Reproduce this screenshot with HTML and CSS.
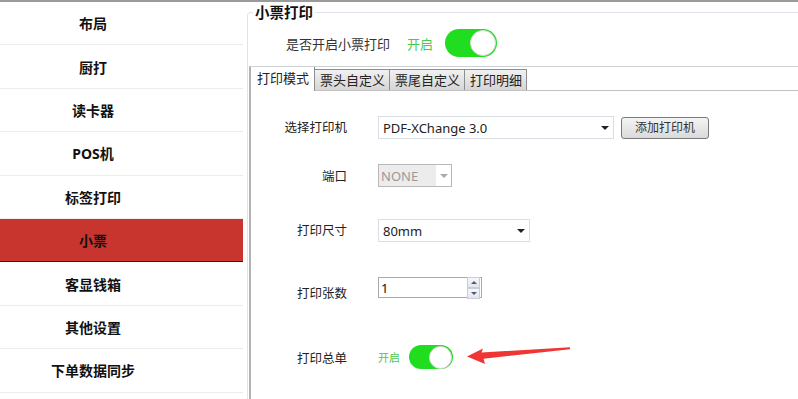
FILE: index.html
```html
<html>
<head>
<meta charset="utf-8">
<link rel="stylesheet" href="styles.css">
</head>
<body>
<div class="topbar"></div>
<div class="main">
	<div class="side">
		<div class="item">布局</div>
		<div class="item">厨打</div>
		<div class="item">读卡器</div>
		<div class="item">POS机</div>
		<div class="item">标签打印</div>
		<div class="item active">小票</div>
		<div class="item">客显钱箱</div>
		<div class="item">其他设置</div>
		<div class="item">下单数据同步</div>
	</div>

	<fieldset class="group">
		<legend class="title">小票打印</legend>
		<div class="enable">
			<span class="enable-label">是否开启小票打印</span>
			<span class="on-text">开启</span>
			<span class="switch"><span class="knob"></span></span>
		</div>

		<div class="tabctl">
			<div class="tabbar">
				<div class="tab sel">打印模式</div>
				<div class="tab">票头自定义</div>
				<div class="tab">票尾自定义</div>
				<div class="tab">打印明细</div>
			</div>
			<div class="pane">
				<div class="row r1">
					<div class="label">选择打印机</div>
					<div class="ctrls">
						<div class="select w236"><span>PDF-XChange 3.0</span><span class="arrow"></span></div>
						<div class="button">添加打印机</div>
					</div>
				</div>
				<div class="row r2">
					<div class="label lower">端口</div>
					<div class="select disabled"><span class="dis-text">NONE</span><span class="arrow grey"></span></div>
				</div>
				<div class="row r3">
					<div class="label">打印尺寸</div>
					<div class="select w152"><span>80mm</span><span class="arrow"></span></div>
				</div>
				<div class="row r4">
					<div class="label low">打印张数</div>
					<div class="spin">
						<span class="spin-val">1</span>
						<span class="spin-btns">
							<span class="sbtn"><span class="up"></span></span>
							<span class="sbtn"><span class="down"></span></span>
						</span>
					</div>
				</div>
				<div class="row r5">
					<div class="label lower">打印总单</div>
					<div class="ctrls">
						<span class="on-text small">开启</span>
						<span class="switch small-switch"><span class="knob"></span></span>
					</div>
				</div>
			</div>
		</div>
	</fieldset>
</div>

<svg class="pointer" width="798" height="399" viewBox="0 0 798 399">
	<polygon points="467,356.5 483,348.5 481.5,352.5 570,347.3 570,349.2 483.5,358.8 485,364" fill="#f03535"/>
</svg>
</body>
</html>
```

FILE: styles.css
```css
body
{
margin:0;
font-family:"Noto Sans","Noto Sans CJK SC",sans-serif;
color:#333;
background:#fff;
overflow:hidden;
}
.topbar
{
height:2px;
background-color:#9a9a9a;
}
.main
{
display:flex;
height:397px;
}

/* left menu */
.side
{
width:243px;
flex:none;
}
.item
{
height:42.4px;
border-bottom:1px solid #ececec;
display:flex;
align-items:center;
justify-content:center;
padding-right:57px;
font-size:14px;
font-weight:bold;
color:#111;
}
.item.active
{
background-color:#c8352f;
border-bottom:1px solid #4a1212;
}

/* group box */
.group
{
flex:1;
min-width:0;
margin:0 0 0 4px;
padding:0;
border:0;
border-top:1px solid #dfe4ea;
border-left:1px solid #dfe4ea;
border-top-left-radius:4px;
}
.title
{
margin-left:5px;
padding:0 2px;
font-size:14.5px;
font-weight:bold;
line-height:20px;
color:#111;
}
.enable
{
display:flex;
align-items:center;
height:28px;
margin-top:7px;
padding-left:38px;
font-size:13px;
}
.enable-label
{
margin-right:17px;
}
.on-text
{
color:#4cc94c;
font-size:13px;
margin-right:12px;
}
.on-text.small
{
font-size:11px;
margin-right:9px;
}
.switch
{
width:52px;
height:28px;
border-radius:14px;
background-color:#20dd20;
display:flex;
justify-content:flex-end;
align-items:center;
box-sizing:border-box;
padding-right:1px;
}
.knob
{
width:26px;
height:26px;
border-radius:50%;
background:#fff;
border:1px solid #d8d8d8;
box-sizing:border-box;
}
.small-switch
{
width:44px;
height:24px;
border-radius:12px;
}
.small-switch .knob
{
width:23px;
height:23px;
}

/* tabs */
.tabctl
{
margin:9px 0 0 1px;
border-top:1px solid #cfd3d8;
border-left:2px solid #b3b3b3;
height:340px;
}
.tabbar
{
display:flex;
align-items:flex-end;
height:23px;
border-bottom:1px solid #c2c2c2;
}
.tab
{
height:20px;
line-height:20px;
padding:0 4px 0 5px;
font-size:13px;
color:#222;
border:1px solid #8e8e8e;
border-bottom:0;
margin-left:-1px;
background:linear-gradient(#f1f1f1,#d6d6d6);
}
.tab.sel
{
height:24px;
line-height:23px;
margin-left:0;
margin-bottom:-1px;
padding:0 5px 0 6px;
border-top:0;
border-left:0;
background:#fff;
}

/* form */
.row
{
display:flex;
align-items:center;
}
.r1 { margin-top:25px; height:23px; }
.r2 { margin-top:25px; height:23px; }
.r3 { margin-top:32px; height:23px; }
.r4 { margin-top:35px; height:21px; }
.r5 { margin-top:47px; height:24px; }
.label
{
width:96px;
margin-right:31px;
text-align:right;
font-size:12.5px;
line-height:16px;
color:#222;
}
.label.lower { padding-top:3px; }
.label.low { padding-top:12px; }
.ctrls
{
display:flex;
align-items:center;
}
.select
{
height:23px;
box-sizing:border-box;
border:1px solid #d9dee4;
display:flex;
align-items:center;
justify-content:space-between;
padding:0 3px 0 4px;
font-size:13px;
color:#222;
}
.w236 { width:236px; }
.w152 { width:152px; }
.arrow
{
width:0;
height:0;
border-left:4px solid transparent;
border-right:4px solid transparent;
border-top:4px solid #222;
margin-right:1px;
}
.arrow.grey
{
border-top-color:#aaa;
margin-right:3px;
}
.select.disabled
{
width:74px;
border-color:#b8b8b8;
padding:0 0 0 0;
}
.dis-text
{
display:flex;
align-items:center;
width:57px;
height:21px;
padding-left:2px;
box-sizing:border-box;
background:#ececec;
color:#999;
}
.button
{
margin-left:7px;
width:88px;
height:22px;
box-sizing:border-box;
border:1px solid #7a7a7a;
border-radius:3px;
background:linear-gradient(#f4f4f4,#dadada);
font-size:12px;
line-height:20px;
text-align:center;
color:#333;
}
.spin
{
width:104px;
height:21px;
box-sizing:border-box;
border:1px solid #a9a9a9;
display:flex;
align-items:center;
justify-content:space-between;
font-size:13px;
color:#111;
}
.spin-val
{
padding-left:2px;
}
.spin-btns
{
display:flex;
flex-direction:column;
width:13px;
margin-right:1px;
}
.sbtn
{
height:9px;
border:1px solid #c8cdd6;
background:linear-gradient(#f6f7f9,#e3e6ec);
display:flex;
align-items:center;
justify-content:center;
}
.up
{
border-left:3px solid transparent;
border-right:3px solid transparent;
border-bottom:3px solid #4a5a80;
}
.down
{
border-left:3px solid transparent;
border-right:3px solid transparent;
border-top:3px solid #4a5a80;
}

/* annotation arrow over the form */
.pointer
{
position:absolute;
left:0;
top:0;
pointer-events:none;
}
```
